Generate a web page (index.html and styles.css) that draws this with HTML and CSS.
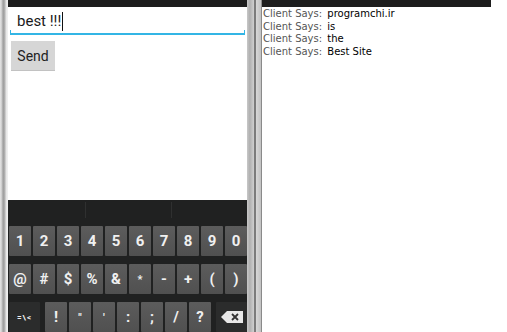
FILE: index.html
```html
<!DOCTYPE html>
<html>
<head>
<meta charset="utf-8">
<link rel="stylesheet" href="styles.css">
</head>
<body>
<div class="screen">
  <div class="frame-left"></div>
  <div class="phone">
    <div class="status"></div>
    <div class="content">
      <div class="edit">
        <span class="edit-text">best !!!</span><span class="cursor"></span>
        <div class="underline"></div>
      </div>
      <div class="btn">Send</div>
    </div>
    <div class="kbd">
      <div class="suggest">
        <div class="sug s1"></div><div class="sug s2"></div><div class="sug s3"></div>
      </div>
      <div class="row">
        <div class="key">1</div><div class="key">2</div><div class="key">3</div><div class="key">4</div><div class="key">5</div><div class="key">6</div><div class="key">7</div><div class="key">8</div><div class="key">9</div><div class="key">0</div>
      </div>
      <div class="row">
        <div class="key">@</div><div class="key">#</div><div class="key">$</div><div class="key">%</div><div class="key">&amp;</div><div class="key sm">*</div><div class="key">-</div><div class="key">+</div><div class="key">(</div><div class="key">)</div>
      </div>
      <div class="row row3">
        <div class="key special small">=\&lt;</div>
        <div class="mid">
          <div class="key">!</div><div class="key sm">"</div><div class="key sm">'</div><div class="key">:</div><div class="key">;</div><div class="key">/</div><div class="key">?</div>
        </div>
        <div class="key special">
          <svg width="22" height="12" viewBox="0 0 22 12"><path d="M6 0H22V12H6L0 6Z" fill="#e8e8e8"/><path d="M11 3L17 9M17 3L11 9" stroke="#333" stroke-width="1.8"/></svg>
        </div>
      </div>
    </div>
  </div>
  <div class="divider">
    <div class="d1"></div><div class="d2"></div><div class="d3"></div><div class="d4"></div>
  </div>
  <div class="right">
    <div class="rbar"></div>
    <div class="log">
      <div class="line"><span class="lbl">Client Says:</span> <span class="msg">programchi.ir</span></div>
      <div class="line"><span class="lbl">Client Says:</span> <span class="msg">is</span></div>
      <div class="line"><span class="lbl">Client Says:</span> <span class="msg">the</span></div>
      <div class="line"><span class="lbl">Client Says:</span> <span class="msg">Best Site</span></div>
    </div>
  </div>
</div>
</body>
</html>
```

FILE: styles.css
```css
html, body {
  margin: 0;
  padding: 0;
  background: #ffffff;
}
.screen {
  width: 507px;
  height: 332px;
  display: flex;
  overflow: hidden;
}
.frame-left {
  width: 8px;
  flex: none;
  background: linear-gradient(to right, #e6e6e6 0, #c8c8c8 2px, #9a9a9a 3px, #b4b4b4 5px, #e4e4e4 6px, #f2f2f2 8px);
}
.phone {
  width: 239px;
  flex: none;
  display: flex;
  flex-direction: column;
}
.status {
  height: 7px;
  background: #1d1d1d;
}
.content {
  height: 193px;
  background: #ffffff;
  padding: 0 2px;
  box-sizing: border-box;
}
.edit {
  position: relative;
  height: 27px;
  padding: 4px 0 0 7px;
  box-sizing: border-box;
  display: flex;
  align-items: flex-start;
  font-family: Roboto, "Noto Sans", sans-serif;
  font-size: 15px;
  color: #1a1a1a;
  line-height: 20px;
}
.cursor {
  display: inline-block;
  width: 1px;
  height: 19px;
  background: #111;
  margin-left: 1px;
  margin-top: 1px;
}
.underline {
  position: absolute;
  left: 0;
  right: 0;
  bottom: -1px;
  border-left: 1px solid #33b5e5;
  border-right: 1px solid #33b5e5;
  border-bottom: 2px solid #33b5e5;
  box-sizing: border-box;
  height: 5px;
}
.btn {
  margin: 7px 0 0 1px;
  width: 44px;
  height: 30px;
  background: #d6d6d6;
  border-bottom: 1px solid #c2c2c2;
  box-sizing: border-box;
  display: flex;
  align-items: center;
  justify-content: center;
  font-family: Roboto, "Noto Sans", sans-serif;
  font-size: 14px;
  color: #222;
}
.kbd {
  height: 132px;
  background: #202121;
  padding: 0 0 0 1px;
  display: flex;
  flex-direction: column;
  gap: 8px;
}
.suggest {
  height: 24px;
  display: flex;
  padding-top: 2px;
}
.sug {
  border-right: 1px solid #2f3030;
}
.s1 {
  width: 76px;
}
.s2 {
  width: 85px;
}
.s3 {
  flex: 1;
  border-right: none;
}
.row {
  display: flex;
  gap: 2px;
  height: 30px;
  flex: none;
}
.key {
  width: 22px;
  height: 30px;
  flex: none;
  background: linear-gradient(#5c5c5c, #505050);
  border-radius: 1px;
  display: flex;
  align-items: center;
  justify-content: center;
  color: #f0f0f0;
  font-family: Roboto, "Noto Sans", sans-serif;
  font-weight: bold;
  font-size: 15px;
}
.key.sm {
  font-size: 11px;
}
.row3 {
  gap: 5px;
}
.mid {
  display: flex;
  gap: 2px;
}
.key.special {
  width: 31px;
  background: #2b2c2c;
}
.key.small {
  font-size: 8px;
  letter-spacing: 1px;
}
.divider {
  width: 15px;
  flex: none;
  display: flex;
}
.d1 {
  width: 7px;
  background: linear-gradient(to right, #c8c8c8, #b0b0b0 40%, #d0d0d0);
}
.d2 {
  width: 2px;
  background: #7c7c7c;
}
.d3 {
  width: 5px;
  background: linear-gradient(to right, #d8d8d8, #c2c2c2);
}
.d4 {
  width: 1px;
  background: #8a8a8a;
}
.right {
  flex: 1;
  display: flex;
  flex-direction: column;
}
.rbar {
  height: 7px;
  width: 229px;
  background: #1d1d1d;
}
.log {
  padding: 1px 0 0 1px;
  font-family: "DejaVu Sans", sans-serif;
  font-size: 10px;
  line-height: 12.7px;
}
.lbl {
  color: #555;
}
.msg {
  color: #000;
  margin-left: 2px;
}
```
